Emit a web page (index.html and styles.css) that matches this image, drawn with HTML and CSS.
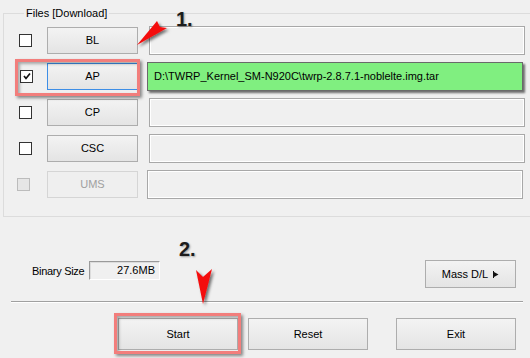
FILE: index.html
```html
<!DOCTYPE html>
<html>
<head>
    <meta charset="UTF-8">
    <title>Odin - Files</title>
    <link rel="stylesheet" href="styles.css">
</head>
<body>
    <div class="window">
        <fieldset class="files-group">
            <legend>Files [Download]</legend>
            <div class="file-row">
                <span class="check"></span>
                <button class="btn file-btn">BL</button>
                <div class="path-field"></div>
            </div>
            <div class="file-row">
                <span class="check checked">
                    <svg width="8" height="8" viewBox="0 0 8 8"><path d="M1 4 L3 6.5 L7 1.5" fill="none" stroke="#111" stroke-width="1.7"/></svg>
                </span>
                <button class="btn file-btn focused">AP</button>
                <div class="path-field shift loaded">D:\TWRP_Kernel_SM-N920C\twrp-2.8.7.1-noblelte.img.tar</div>
            </div>
            <div class="file-row">
                <span class="check"></span>
                <button class="btn file-btn">CP</button>
                <div class="path-field"></div>
            </div>
            <div class="file-row">
                <span class="check"></span>
                <button class="btn file-btn">CSC</button>
                <div class="path-field"></div>
            </div>
            <div class="file-row">
                <span class="check disabled"></span>
                <button class="btn file-btn" disabled>UMS</button>
                <div class="path-field shift"></div>
            </div>
        </fieldset>

        <div class="info-row">
            <div class="binary">
                <span class="binary-label">Binary Size</span>
                <span class="binary-value">27.6MB</span>
            </div>
            <button class="btn mass-btn">Mass D/L
                <svg width="6" height="7" viewBox="0 0 6 7"><path d="M0.5 0 V7" stroke="#111" stroke-width="1"/><path d="M1 1 L5.5 3.5 L1 6 Z" fill="#111"/></svg>
            </button>
        </div>

        <div class="separator"></div>

        <div class="action-row">
            <button class="btn action-btn">Start</button>
            <button class="btn action-btn">Reset</button>
            <button class="btn action-btn exit">Exit</button>
        </div>
    </div>

    <!-- annotations drawn over the screenshot -->
    <div class="highlight hl-ap"></div>
    <div class="highlight hl-start"></div>
    <span class="step step-1">1.</span>
    <span class="step step-2">2.</span>
    <svg class="arrows" width="530" height="358" viewBox="0 0 530 358">
        <defs>
            <filter id="shadow" x="-50%" y="-50%" width="200%" height="200%">
                <feDropShadow dx="2" dy="2" stdDeviation="1.5" flood-color="#000" flood-opacity="0.55"/>
            </filter>
        </defs>
        <polygon points="137,45 157,21 160,27 167,28" fill="#f40d0d" filter="url(#shadow)"/>
        <polygon points="196,270 203,277 212,269 203,304" fill="#f40d0d" filter="url(#shadow)"/>
    </svg>
</body>
</html>
```

FILE: styles.css
```css
body {
    margin: 0;
    width: 530px;
    height: 358px;
    overflow: hidden;
    position: relative;
    background: #f0f0f0;
    font-family: 'Liberation Sans', Arial, sans-serif;
    font-size: 11px;
    color: #000;
}
.window {
    width: 530px;
}
.files-group {
    margin: 6px -20px 0 3px;
    padding: 2px 0 14px 15px;
    border: 1px solid #dcdcdc;
    border-right: none;
    min-width: 0;
}
.files-group legend {
    margin-left: 5px;
    padding: 0 2px;
    line-height: 14px;
}
.file-row {
    display: flex;
    align-items: center;
    height: 36px;
}
.check {
    width: 11px;
    height: 11px;
    border: 1px solid #333;
    background: #fff;
    display: flex;
    align-items: center;
    justify-content: center;
    margin-right: 15px;
}
.check.checked {
    margin-left: 1px;
    margin-right: 14px;
}
.check.disabled {
    border-color: #bcbcbc;
    background: #e6e6e6;
    margin-left: -2px;
    margin-right: 17px;
}
.btn {
    font-family: 'Liberation Sans', Arial, sans-serif;
    font-size: 11px;
    color: #000;
    border: 1px solid #adadad;
    background: linear-gradient(#f3f3f3, #e4e4e4);
    padding: 0;
    margin: 0;
}
.btn:disabled {
    border-color: #d5d5d5;
    background: #efefef;
    color: #a0a0a0;
}
.file-btn {
    width: 91px;
    height: 27px;
    margin-right: 11px;
}
.file-btn.focused {
    border-color: #3d8ee6;
}
.path-field {
    width: 376px;
    height: 29px;
    border: 1px solid #a8a8a8;
    box-shadow: inset 1px 1px 0 #fff, inset -1px -1px 0 #fff;
    box-sizing: border-box;
    display: flex;
    align-items: center;
    padding-left: 4px;
}
.path-field.shift {
    margin-left: -2px;
}
.path-field.loaded {
    background: #80ef80;
    border-color: #6a6a6a;
    box-shadow: 2px 2px 2px rgba(0, 0, 0, 0.55);
    padding-left: 6px;
}
.info-row {
    display: flex;
    align-items: flex-start;
    justify-content: space-between;
    padding: 43px 14px 0 32px;
}
.binary {
    display: flex;
    align-items: center;
    margin-top: 1px;
}
.binary-label {
    width: 57px;
    white-space: nowrap;
    letter-spacing: -0.3px;
}
.binary-value {
    width: 65px;
    height: 17px;
    line-height: 17px;
    text-align: right;
    padding-right: 4px;
    border: 1px solid;
    border-color: #9a9a9a #ffffff #ffffff #9a9a9a;
    box-shadow: inset 1px 1px 0 #dcdcdc;
}
.mass-btn {
    width: 91px;
    height: 28px;
    display: flex;
    align-items: center;
    justify-content: center;
    gap: 5px;
}
.separator {
    margin: 13px 7px 0 11px;
    border-top: 1px solid #a0a0a0;
    border-bottom: 1px solid #ffffff;
}
.action-row {
    display: flex;
    padding: 15px 0 0 118px;
}
.action-btn {
    width: 120px;
    height: 32px;
    margin-right: 10px;
}
.action-btn.exit {
    margin-left: 18px;
}
.highlight {
    position: absolute;
    border: 3px solid #f27e7c;
    box-shadow: 2px 2px 3px rgba(0, 0, 0, 0.45), inset 2px 2px 3px rgba(0, 0, 0, 0.3);
    box-sizing: border-box;
}
.hl-ap {
    left: 15px;
    top: 59px;
    width: 125px;
    height: 37px;
}
.hl-start {
    left: 114px;
    top: 313px;
    width: 127px;
    height: 41px;
}
.step {
    position: absolute;
    font-family: 'Liberation Sans', Arial, sans-serif;
    font-weight: bold;
    font-size: 20px;
    line-height: 20px;
    color: #1c1c1c;
    text-shadow: 1px 1px 2px rgba(0, 0, 0, 0.35);
}
.step-1 {
    left: 176px;
    top: 9px;
}
.step-2 {
    left: 179px;
    top: 239px;
}
.arrows {
    position: absolute;
    left: 0;
    top: 0;
    pointer-events: none;
}
```
